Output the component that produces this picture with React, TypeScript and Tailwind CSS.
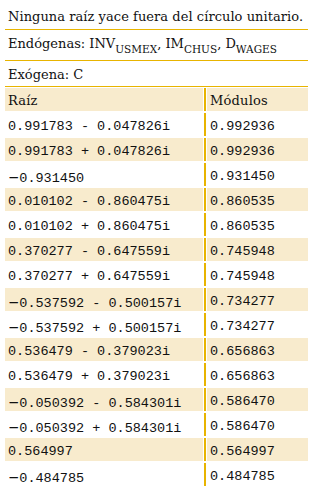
const serif = "font-['DejaVu_Serif',serif]"
const mono = "font-['Liberation_Mono',monospace]"

const roots: [string, string][] = [
  ['0.991783 - 0.047826i', '0.992936'],
  ['0.991783 + 0.047826i', '0.992936'],
  ['−0.931450', '0.931450'],
  ['0.010102 - 0.860475i', '0.860535'],
  ['0.010102 + 0.860475i', '0.860535'],
  ['0.370277 - 0.647559i', '0.745948'],
  ['0.370277 + 0.647559i', '0.745948'],
  ['−0.537592 - 0.500157i', '0.734277'],
  ['−0.537592 + 0.500157i', '0.734277'],
  ['0.536479 - 0.379023i', '0.656863'],
  ['0.536479 + 0.379023i', '0.656863'],
  ['−0.050392 - 0.584301i', '0.586470'],
  ['−0.050392 + 0.584301i', '0.586470'],
  ['0.564997', '0.564997'],
  ['−0.484785', '0.484785'],
]

function Num({ value }: { value: string }) {
  if (value.startsWith('−')) {
    return (
      <>
        <span className="font-['DejaVu_Sans',sans-serif]">−</span>
        {value.slice(1)}
      </>
    )
  }
  return <>{value}</>
}

function Sub({ children }: { children: string }) {
  return <span className="text-[10.5px] align-[-5px]">{children}</span>
}

function Row({ left, right, shaded, head }: { left: React.ReactNode; right: React.ReactNode; shaded: boolean; head?: boolean }) {
  const bg = shaded ? 'bg-[#f8ebcd]' : 'bg-white'
  const cell = head
    ? `${serif} text-[13px] pt-[2px] leading-[21px] tracking-[0.2px]`
    : `${mono} text-[13.5px] pt-[5px] leading-[18px]`
  return (
    <div className="flex h-[23px]">
      <div className={`w-[198px] pl-[3px] ${bg} ${cell}`}>{left}</div>
      <div className="ml-[1px] w-[2px] bg-[#e8b400]" />
      <div className={`ml-[1px] flex-1 pl-[3px] ${bg} ${cell}`}>{right}</div>
    </div>
  )
}

export default function App() {
  return (
    <div className="w-[313px] h-[492px] bg-white text-[#111]">
      <div className={`ml-[5px] w-[303px] ${serif} text-[13px] leading-[20px]`}>
        <div className="h-[30px] pt-[7px] pl-[3px] border-b border-[#e8b400] whitespace-nowrap tracking-[0.05px]">
          Ninguna raíz yace fuera del círculo unitario.
        </div>
        <div className="h-[31px] pt-[4px] pl-[3px] border-b border-[#e8b400] whitespace-nowrap">
          Endógenas: INV<Sub>USMEX</Sub>, IM<Sub>CHUS</Sub>, D<Sub>WAGES</Sub>
        </div>
        <div className="h-[26px] pt-[4px] pl-[3px] border-b border-[#e8b400]">
          Exógena: C
        </div>

        <div className="mt-[1px] flex flex-col gap-[2px]">
          <Row head shaded left="Raíz" right="Módulos" />
          {roots.map(([root, mod], i) => (
            <Row key={i} shaded={i % 2 === 1} left={<Num value={root} />} right={mod} />
          ))}
        </div>
      </div>
    </div>
  )
}
